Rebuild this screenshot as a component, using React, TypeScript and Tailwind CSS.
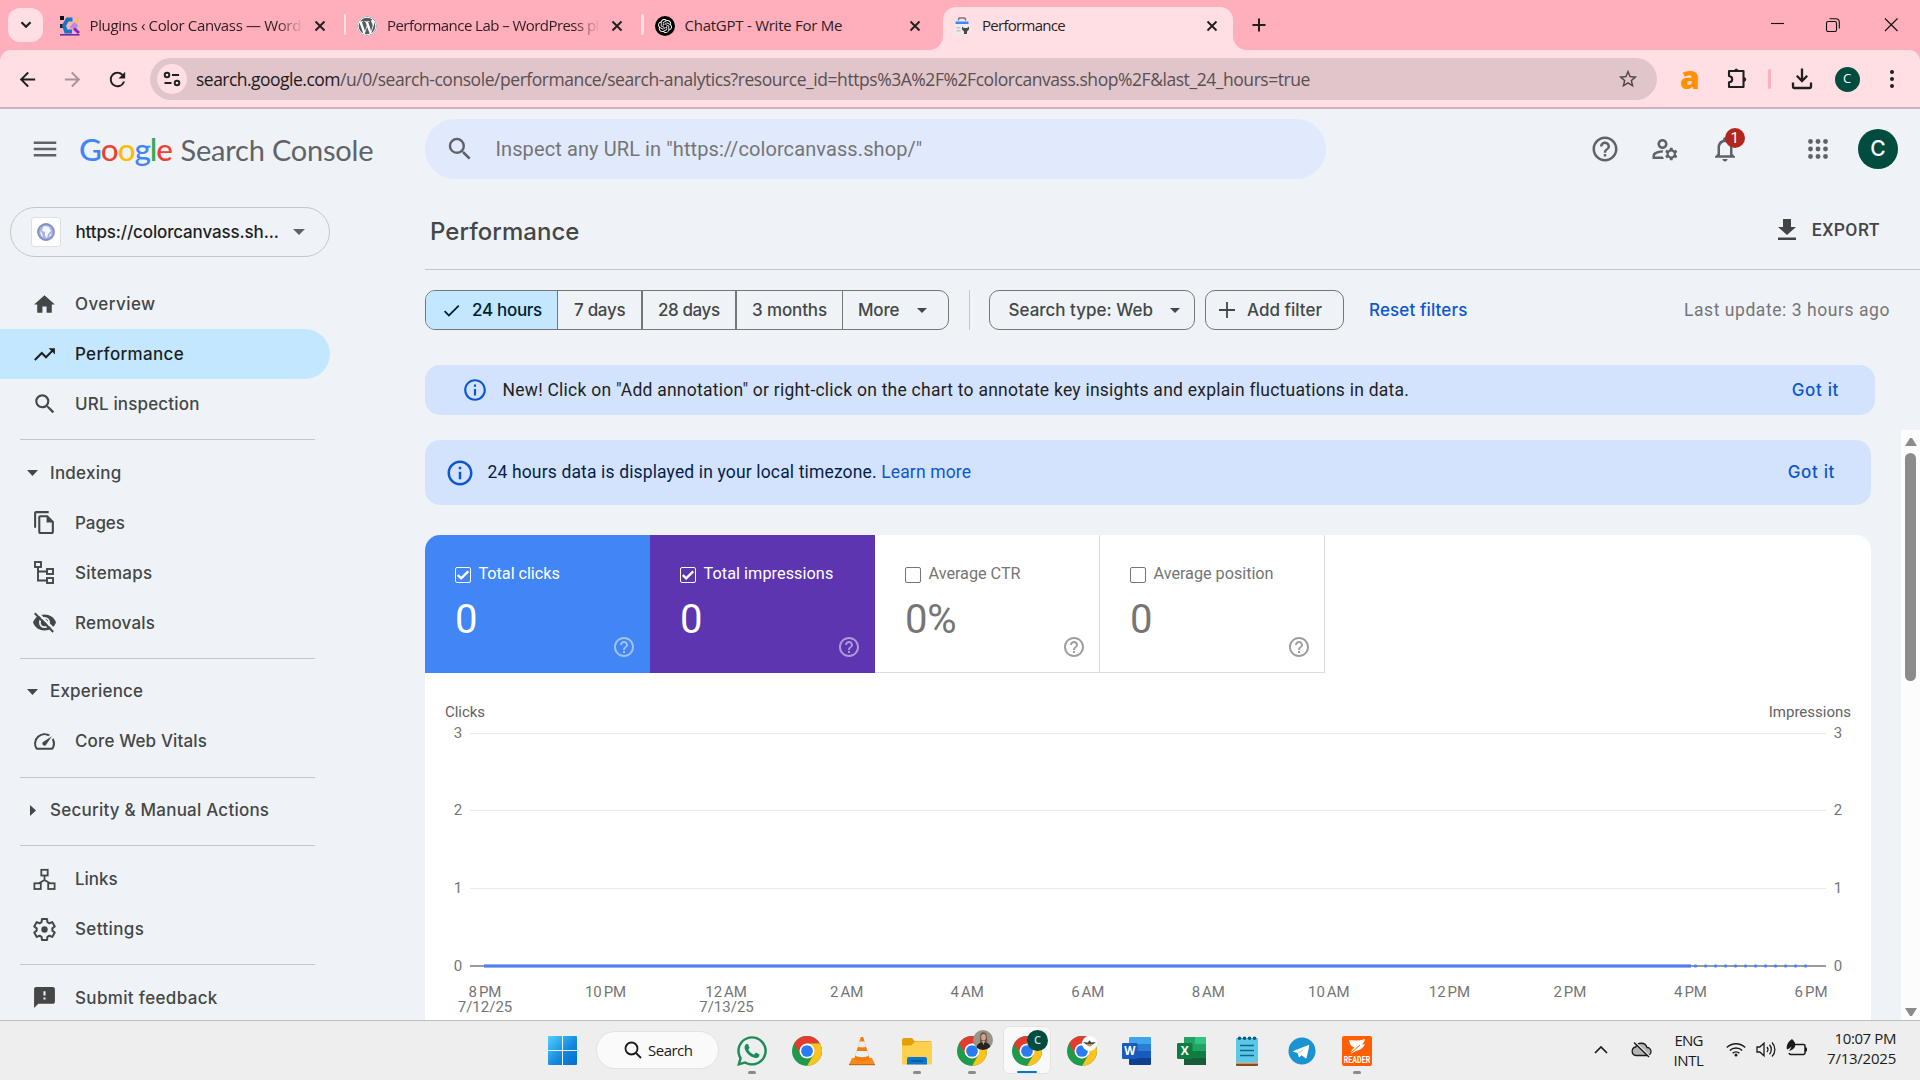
import type { ReactNode } from "react";
import {
  MdArrowBack,
  MdArrowForward,
  MdRefresh,
  MdStarBorder,
  MdMenu,
  MdSearch,
  MdHelpOutline,
  MdOutlineManageAccounts,
  MdNotificationsNone,
  MdHome,
  MdTrendingUp,
  MdOutlineFileCopy,
  MdFeedback,
  MdSpeed,
  MdCheck,
  MdInfoOutline,
} from "react-icons/md";
import { FaWhatsapp, FaWordpress } from "react-icons/fa";
import { SiOpenai } from "react-icons/si";

const CHROME_FONT = "font-['Open_Sans','Noto_Sans',sans-serif]";

/* ---------- Browser tabs ---------- */

function CanvassIcon() {
  return (
    <svg viewBox="0 0 20 20" className="size-5">
      <rect x="0" y="0" width="4" height="4" fill="#111" />
      <rect x="0" y="8" width="3" height="4" fill="#222" />
      <path d="M12.500 3.500H7.500L4 9.500 6 15.500h6" fill="none" stroke="#1277c4" strokeWidth="3.800" />
      <path d="M14 6l-4.500 5.500 6.500 2.500 2-5z" fill="#b98ad9" />
      <path d="M14 12.500l5 4.500" stroke="#7a2bc2" strokeWidth="3" />
      <path d="M16 7l3-4.500" stroke="#d8d13b" strokeWidth="1.600" />
      <path d="M0 18.800h19.500" stroke="#6a2bb0" strokeWidth="1.600" />
    </svg>
  );
}

function ConsoleIcon() {
  return (
    <svg viewBox="0 0 20 20" className="size-5">
      <path d="M6.500 5V3.200C6.500 2.500 7 2 7.600 2h4.800c.6 0 1.100.5 1.100 1.200V5" fill="none" stroke="#777" strokeWidth="1.500" />
      <rect x="2.500" y="4.500" width="15" height="14" rx="1" fill="#ececec" />
      <rect x="3.500" y="5.500" width="13" height="2.500" fill="#4285f4" />
      <rect x="4.500" y="11" width="4" height="1.500" fill="#c4c4c4" />
      <rect x="4.500" y="14" width="4" height="1.500" fill="#c4c4c4" />
      <path d="M10 10.500v3l2 2V18h3v-2.500l2-2v-3L15.200 12h-3.400z" fill="#4a4a4a" />
    </svg>
  );
}

function TabClose() {
  return (
    <svg viewBox="0 0 16 16" className="mb-1.5 ml-[9px] size-4 shrink-0" stroke="#1f1f1f" strokeWidth="1.900">
      <path d="M3.500 3.500l9 9M12.500 3.500l-9 9" />
    </svg>
  );
}

function Tab({ icon, title, fade, active, divider }: { icon: ReactNode; title: ReactNode; fade?: boolean; active?: boolean; divider?: boolean }) {
  return (
    <div className="flex h-[50px] w-[297.5px] shrink-0 pt-[7px]">
      <div
        className={
          active
            ? "relative flex h-[43px] w-[290px] items-center rounded-t-[13px] bg-[#ffdfe4] pr-2 pl-[9px]"
            : "flex h-[43px] w-[290px] items-center pr-2 pl-[9px]"
        }
      >
        {active && (
          <>
            <svg viewBox="0 0 14 14" className="absolute bottom-0 -left-[14px] size-[14px]">
              <path d="M14 0v14H0A14 14 0 0 0 14 0z" fill="#ffdfe4" />
            </svg>
            <svg viewBox="0 0 14 14" className="absolute -right-[14px] bottom-0 size-[14px]">
              <path d="M0 0v14h14A14 14 0 0 1 0 0z" fill="#ffdfe4" />
            </svg>
          </>
        )}
        <div className="mb-1.5 flex size-5 shrink-0 items-center justify-center">{icon}</div>
        <div
          className={
            fade
              ? "mb-1.5 ml-[10px] w-[213px] overflow-hidden text-[15px] whitespace-nowrap text-[#2b1f22] [mask-image:linear-gradient(to_right,black_88%,transparent_100%)]"
              : "mb-1.5 ml-[10px] w-[213px] overflow-hidden text-[15px] whitespace-nowrap text-[#2b1f22]"
          }
        >
          {title}
        </div>
        <TabClose />
      </div>
      {divider && <div className="mt-[7px] ml-[3px] h-[21px] w-[2.5px] rounded bg-[#ffdfe4]" />}
    </div>
  );
}

function TabStrip() {
  return (
    <div className="flex h-[50px] bg-[#ffaebc]">
      <div className="mt-2 mr-[7.5px] ml-2 flex h-[34px] w-[35px] shrink-0 items-center justify-center rounded-xl bg-[#ffdfe4]">
        <svg viewBox="0 0 12 8" className="h-2 w-3" fill="none" stroke="#1f1f1f" strokeWidth="2.200">
          <path d="M1.500 1.200L6 5.800l4.500-4.600" />
        </svg>
      </div>
      <Tab icon={<CanvassIcon />} title={<span className="tracking-[-0.35px]">Plugins ‹ Color Canvass — WordPress</span>} fade divider />
      <Tab icon={<FaWordpress className="size-5 rounded-full bg-white text-[#555a5c]" />} title={<span className="tracking-[-0.55px]">Performance Lab – WordPress plugin</span>} fade divider />
      <Tab
        icon={
          <span className="flex size-5 items-center justify-center rounded-full bg-black">
            <SiOpenai className="size-3.5 text-white" />
          </span>
        }
        title={<span className="tracking-[-0.25px]">ChatGPT - Write For Me</span>}
      />
      <Tab icon={<ConsoleIcon />} title={<span className="tracking-[-0.71px]">Performance</span>} active />
      <div className="flex h-[50px] w-9 items-center justify-center">
        <svg viewBox="0 0 14 14" className="size-3.5" stroke="#1f1f1f" strokeWidth="2">
          <path d="M7 .5v13M.5 7h13" />
        </svg>
      </div>
      <div className="flex flex-1 items-start justify-end pt-[17px] pr-5">
        <svg viewBox="0 0 130 15" className="h-[15px] w-[130px]" fill="none" stroke="#111" strokeWidth="1.100">
          <path d="M1 6.500h13" />
          <path d="M58 4.500h7a1.500 1.500 0 0 1 1.500 1.500v7a1.500 1.500 0 0 1-1.500 1.500h-7a1.500 1.500 0 0 1-1.500-1.500V6A1.500 1.500 0 0 1 58 4.500zM59.500 1.700H66a3.300 3.300 0 0 1 3.300 3.300v6.500" />
          <path d="M115 1.500l12.500 12.500M127.500 1.500L115 14" />
        </svg>
      </div>
    </div>
  );
}

/* ---------- Address bar ---------- */

function Toolbar() {
  return (
    <div className="bg-[#ffaebc]">
      <div className="flex h-[59px] rounded-t-[11px] border-b-2 border-[#cfb2b8] bg-[#ffdfe4] pt-2">
        <div className="flex h-[42px] w-[150px] items-center pl-[16px] text-[#1f1f1f]">
          <MdArrowBack className="size-[23px]" />
          <MdArrowForward className="ml-[22px] size-[23px] text-[#a8929a]" />
          <MdRefresh className="ml-[22px] size-[23px]" />
        </div>
        <div className="flex h-[42px] w-[1507px] items-center rounded-full bg-[#e0c5ca] pr-[18.5px] pl-[6.5px]">
          <div className="flex size-[30px] items-center justify-center rounded-full bg-[#ffdfe4]">
            <svg viewBox="0 0 18 16" className="h-4 w-[18px]" fill="none" stroke="#1f1f1f" strokeWidth="1.900">
              <circle cx="4" cy="4" r="2.300" />
              <path d="M9 4h7M1.500 12h7" />
              <circle cx="14" cy="12" r="2.300" />
            </svg>
          </div>
          <div className="ml-[9.500px] flex-1 text-[17.500px] tracking-[-0.445px] whitespace-nowrap text-[#5a4f52]">
            <span className="tracking-[-0.52px] text-[#1f1a1b]">search.google.com</span>
            /u/0/search-console/performance/search-analytics?resource_id=https%3A%2F%2Fcolorcanvass.shop%2F&amp;last_24_hours=true
          </div>
          <MdStarBorder className="size-[22px] text-[#4f4649]" />
        </div>
        <div className="flex h-[42px] flex-1 items-center">
          <span className="ml-6 flex h-7 w-[18px] items-center justify-center pb-1 font-['Open_Sans'] text-[32px] leading-none font-extrabold text-[#ff9100]">a</span>
          <svg viewBox="0 0 24 24" className="ml-[26px] size-6" fill="none" stroke="#1f1f1f" strokeWidth="2.100" strokeLinejoin="round">
            <path d="M4 4h14.500v16H4v-4.600c2.300-.3 3.200-1.600 3.200-3.200S6.300 9.300 4 9z" />
            <path d="M9.300 3.600a2.100 2.100 0 0 1 4 0zM19.300 10.400a2.100 2.100 0 0 1 0 4z" fill="#1f1f1f" strokeWidth="1" />
          </svg>
          <span className="ml-[19px] h-5 w-[2.5px] rounded bg-[#ffaebc]" />
          <svg viewBox="0 0 22 22" className="ml-[20.500px] size-[22px]" fill="none" stroke="#1f1f1f" strokeWidth="2.300">
            <path d="M11 .5v12M5.800 7.800l5.200 5.200 5.200-5.200M2 14.500v4a1.500 1.500 0 0 0 1.500 1.500h15a1.500 1.500 0 0 0 1.500-1.500v-4" />
          </svg>
          <span className="ml-[21.500px] flex size-[25px] items-center justify-center rounded-full bg-[#004d40] text-[13px] text-white">C</span>
          <svg viewBox="0 0 6 20" className="ml-[29.500px] h-5 w-1.5" fill="#1f1f1f">
            <circle cx="3" cy="3" r="2" />
            <circle cx="3" cy="10" r="2" />
            <circle cx="3" cy="17" r="2" />
          </svg>
        </div>
      </div>
    </div>
  );
}

/* ---------- Search Console header ---------- */

function GoogleLogo() {
  return (
    <div className="flex w-[300px] items-baseline font-['Lato',sans-serif] whitespace-nowrap">
      <span className="w-[101.5px] text-[31.5px] font-medium tracking-[-1.05px]">
        <span className="text-[#4285f4]">G</span>
        <span className="text-[#ea4335]">o</span>
        <span className="text-[#fbbc04]">o</span>
        <span className="text-[#4285f4]">g</span>
        <span className="text-[#34a853]">l</span>
        <span className="text-[#ea4335]">e</span>
      </span>
      <span className="text-[29px] tracking-[-0.2px] text-[#5f6368]">Search Console</span>
    </div>
  );
}

function ConsoleHeader() {
  return (
    <header className="flex h-[80px] items-center text-[#5f6368]">
      <MdMenu className="ml-[30px] size-[30px]" />
      <div className="ml-[19px] w-[345.500px] pt-0.5">
        <GoogleLogo />
      </div>
      <div className="flex h-[60px] w-[901px] items-center rounded-full bg-[#e1eafd] pl-5 font-['Roboto']">
        <MdSearch className="size-[30px]" />
        <span className="ml-[21px] text-[20px] tracking-[0.1px] text-[#757575]">Inspect any URL in "https://colorcanvass.shop/"</span>
      </div>
      <MdHelpOutline className="ml-[264.500px] size-[30px]" />
      <MdOutlineManageAccounts className="ml-[30px] size-[30px]" />
      <div className="relative ml-[30px]">
        <MdNotificationsNone className="size-[30px]" />
        <span className="absolute -top-[6px] left-[15px] flex h-5 w-[19.5px] items-center justify-center rounded-full bg-[#b3261e] font-['Roboto'] text-[15px] text-white">1</span>
      </div>
      <svg viewBox="0 0 20 20" className="ml-[68px] size-5" fill="currentColor">
        {[2.5, 10, 17.5].map((y) => [2.5, 10, 17.5].map((x) => <circle key={`${x}-${y}`} cx={x} cy={y} r="2.400" />))}
      </svg>
      <span className="ml-[30px] flex size-10 items-center justify-center rounded-full bg-[#004d40] font-['Inter'] text-[21px] font-medium text-white">C</span>
    </header>
  );
}

/* ---------- Sidebar ---------- */

function SitemapGlyph() {
  return (
    <svg viewBox="0 0 25 25" className="size-[25px]" fill="none" stroke="currentColor" strokeWidth="1.900">
      <rect x="3" y="2" width="6" height="5" />
      <rect x="15" y="9" width="6" height="5" />
      <rect x="15" y="18" width="6" height="5" />
      <path d="M6 7v13.500h9M6 11.500h9" />
    </svg>
  );
}

function LinksGlyph() {
  return (
    <svg viewBox="0 0 25 25" className="size-[25px]" fill="none" stroke="currentColor" strokeWidth="1.800">
      <rect x="9.300" y="2.800" width="6.400" height="5.700" />
      <rect x="2.400" y="16.300" width="6.400" height="5.700" />
      <rect x="16.200" y="16.300" width="6.400" height="5.700" />
      <path d="M12.500 8.500v4.500l-5.500 3.300M12.500 13l5.500 3.300" />
    </svg>
  );
}

function RemovalsGlyph() {
  return (
    <svg viewBox="0 0 25 25" className="size-[25px]">
      <path d="M1 12.500C3 7.300 7.400 4.600 12.500 4.600S22 7.300 24 12.500c-2 5.200-6.400 7.900-11.500 7.900S3 17.700 1 12.500z" fill="currentColor" />
      <circle cx="12.500" cy="12.500" r="4.600" fill="none" stroke="#eff3f8" strokeWidth="1.800" />
      <path d="M4.600 1.800l19 19" stroke="#eff3f8" strokeWidth="2.400" />
      <path d="M2.800 3.200l18.400 18.800" stroke="currentColor" strokeWidth="2" />
    </svg>
  );
}

const GEAR_POINTS = Array.from({ length: 6 }, (_, i) => {
  const base = (i * Math.PI) / 3 - Math.PI / 2;
  return [
    [-0.38, 7.9],
    [-0.24, 10.7],
    [0.24, 10.7],
    [0.38, 7.9],
  ]
    .map(([da, r]) => `${(12.5 + r * Math.cos(base + da)).toFixed(2)},${(12.5 + r * Math.sin(base + da)).toFixed(2)}`)
    .join(" ");
}).join(" ");

function SettingsGlyph() {
  return (
    <svg viewBox="0 0 25 25" className="size-[25px]">
      <polygon points={GEAR_POINTS} fill="none" stroke="currentColor" strokeWidth="2" strokeLinejoin="round" />
      <circle cx="12.500" cy="12.500" r="3.200" fill="currentColor" />
    </svg>
  );
}

function NavItem({ icon, label, active }: { icon: ReactNode; label: ReactNode; active?: boolean }) {
  return (
    <div
      className={
        active
          ? "flex h-[50px] w-[330px] shrink-0 items-center rounded-r-full bg-[#c2e7ff] pl-8 text-[#1f1f1f]"
          : "flex h-[50px] w-[330px] shrink-0 items-center pl-8"
      }
    >
      <span className="flex w-[25px] justify-center">{icon}</span>
      <span className="mt-px ml-[18px]">{label}</span>
    </div>
  );
}

function NavGroup({ label, closed }: { label: ReactNode; closed?: boolean }) {
  return (
    <div className="flex h-[50px] shrink-0 items-center pl-[27px]">
      <svg viewBox="0 0 11 11" className="size-[11px]" fill="currentColor">
        {closed ? <path d="M3 0l6 5.500L3 11z" /> : <path d="M0 3h11L5.500 9z" />}
      </svg>
      <span className="mt-px ml-[12px]">{label}</span>
    </div>
  );
}

function NavRule() {
  return (
    <div className="h-[18.75px] shrink-0 pt-2.5 pl-5">
      <div className="h-px w-[295px] bg-[#c4c7c5]" />
    </div>
  );
}

function Sidebar() {
  return (
    <nav className="flex w-[425px] shrink-0 flex-col overflow-hidden pt-[18px] font-['Inter',sans-serif] text-[17px] font-medium whitespace-nowrap text-[#444746]">
      <div className="mb-[22px] ml-2.5 flex h-[50px] w-[320px] shrink-0 items-center rounded-full border border-[#c4c7c5] pl-5 text-[#1f1f1f]">
        <span className="flex size-[30px] items-center justify-center rounded-[3px] border border-[#e0e0e0] bg-white">
          <svg viewBox="0 0 18 18" className="size-[18px]">
            <circle cx="9" cy="9" r="8" fill="#a9b3dc" stroke="#8490c4" strokeWidth="1.800" />
            <path d="M8 3l4 1 2 4-3 3-1 4-2-2V9L5 8l1-4z" fill="#f3f5fc" />
            <path d="M3 8l2 2 1 4-2-2zM12 12l3-2-2 4z" fill="#f3f5fc" />
          </svg>
        </span>
        <span className="mt-px ml-[14.500px] w-[202px] tracking-[-0.14px]">https://colorcanvass.sh...</span>
        <svg viewBox="0 0 12 6" className="ml-[15px] h-1.5 w-3" fill="#5f6368">
          <path d="M0 0h12L6 6z" />
        </svg>
      </div>
      <NavItem icon={<MdHome className="size-[25px]" />} label={<span className="tracking-[0.42px]">Overview</span>} />
      <NavItem active icon={<MdTrendingUp className="size-[25px]" />} label={<span className="tracking-[0.32px]">Performance</span>} />
      <NavItem icon={<MdSearch className="size-[26px] shrink-0" />} label={<span className="tracking-[0.16px]">URL inspection</span>} />
      <NavRule />
      <NavGroup label={<span className="tracking-[0.25px]">Indexing</span>} />
      <NavItem icon={<MdOutlineFileCopy className="size-[25px]" />} label={<span className="tracking-[-0.05px]">Pages</span>} />
      <NavItem icon={<SitemapGlyph />} label={<span className="tracking-[0.26px]">Sitemaps</span>} />
      <NavItem icon={<RemovalsGlyph />} label={<span className="tracking-[0.2px]">Removals</span>} />
      <NavRule />
      <NavGroup label={<span className="tracking-[0.2px]">Experience</span>} />
      <NavItem icon={<MdSpeed className="size-[25px]" />} label={<span className="tracking-[0.13px]">Core Web Vitals</span>} />
      <NavRule />
      <NavGroup closed label={<span className="tracking-[0.22px]">Security &amp; Manual Actions</span>} />
      <NavRule />
      <NavItem icon={<LinksGlyph />} label={<span className="tracking-[-0.05px]">Links</span>} />
      <NavItem icon={<SettingsGlyph />} label={<span className="tracking-[0.38px]">Settings</span>} />
      <NavRule />
      <NavItem icon={<MdFeedback className="size-[25px]" />} label={<span className="tracking-[0.34px]">Submit feedback</span>} />
    </nav>
  );
}

/* ---------- Filters ---------- */

function Caret() {
  return (
    <svg viewBox="0 0 10 5" className="h-[5px] w-[10px] shrink-0" fill="currentColor">
      <path d="M0 0h10L5 5z" />
    </svg>
  );
}

function Filters() {
  return (
    <div className="mt-5 flex h-10 items-center font-['Inter',sans-serif] text-[17px] font-medium whitespace-nowrap text-[#444746]">
      <div className="flex h-10 w-[524px] overflow-hidden rounded-[10px] border border-[#747775]">
        <div className="flex w-[132px] items-center border-r border-[#747775] bg-[#c2e7ff] pl-[14.500px] text-[#001d35]">
          <MdCheck className="size-[21px]" />
          <span className="mt-px ml-[10.500px] tracking-[-0.3px]">24 hours</span>
        </div>
        <div className="flex w-[84.5px] items-center border-r-2 border-[#747775] pt-px pl-[16px] tracking-[-0.3px]">7 days</div>
        <div className="flex w-[94.5px] items-center border-r-2 border-[#747775] pt-px pl-[15.500px] tracking-[-0.4px]">28 days</div>
        <div className="flex w-[106px] items-center border-r border-[#747775] pt-px pl-[15px] tracking-[-0.12px]">3 months</div>
        <div className="flex items-center pt-px pl-[15px] tracking-[-0.2px]">
          More
          <span className="mb-px ml-[17.500px]">
            <Caret />
          </span>
        </div>
      </div>
      <div className="ml-5 h-10 w-px bg-[#c4c7c5]" />
      <div className="ml-[19px] flex h-10 w-[206px] items-center justify-between rounded-[10px] border border-[#747775] pr-[14px] pl-[18.500px]">
        <span className="mt-px">Search type: Web</span>
        <Caret />
      </div>
      <div className="ml-2.5 flex h-10 w-[139px] items-center rounded-[10px] border border-[#747775] pl-[13px]">
        <svg viewBox="0 0 16 16" className="size-4" stroke="currentColor" strokeWidth="1.800">
          <path d="M8 0v16M0 8h16" />
        </svg>
        <span className="mt-px ml-3">Add filter</span>
      </div>
      <span className="mt-px ml-[25px] tracking-[0.12px] text-[#0b57d0]">Reset filters</span>
      <span className="mt-px ml-auto pr-[30px] font-['Roboto'] text-[17.5px] font-normal tracking-[0.56px] text-[#757575]">Last update: 3 hours ago</span>
    </div>
  );
}

/* ---------- Metrics and chart ---------- */

function Metric({ label, value, tone }: { label: ReactNode; value: string; tone: "blue" | "purple" | "plain" }) {
  const on = tone !== "plain";
  return (
    <div
      className={
        tone === "blue"
          ? "relative h-[138px] w-[225px] bg-[#4285f4] pt-[27px] pl-[30px] text-white"
          : tone === "purple"
            ? "relative h-[138px] w-[225px] bg-[#5e35b1] pt-[27px] pl-[30px] text-white"
            : "relative h-[138px] w-[225px] border-r border-b border-[#dadce0] pt-[27px] pl-[30px] text-[#757575]"
      }
    >
      <div className="flex h-[26px] items-center text-[16.25px] whitespace-nowrap">
        <span className="mr-[7.500px] flex size-4 items-center justify-center rounded-[2px] border border-current">
          {on && (
            <svg viewBox="0 0 12 10" className="h-2.5 w-3" fill="none" stroke="currentColor" strokeWidth="2.400">
              <path d="M.8 5l3.400 3.300L11.200 1.300" />
            </svg>
          )}
        </span>
        <span className="-mt-0.5">{label}</span>
      </div>
      <div className="mt-[8px] text-[40px] leading-[48px] tracking-[-0.3px]">{value}</div>
      <MdHelpOutline className={on ? "absolute right-[14px] bottom-[14.500px] size-6 opacity-50" : "absolute right-[13.500px] bottom-[13.500px] size-6 opacity-70"} />
    </div>
  );
}

const HOURS = ["8 PM", "10 PM", "12 AM", "2 AM", "4 AM", "6 AM", "8 AM", "10 AM", "12 PM", "2 PM", "4 PM", "6 PM"];
const LEVELS = [
  { n: 3, y: 60 },
  { n: 2, y: 137 },
  { n: 1, y: 215 },
  { n: 0, y: 293 },
];

function Chart() {
  return (
    <svg viewBox="0 0 1446 347" className="block h-[347px] w-[1446px]" fontFamily="Roboto, sans-serif" fontSize="15" fill="#757575">
      <text x="20" y="44" fill="#616161" textLength="40">
        Clicks
      </text>
      <text x="1426" y="44" fill="#616161" textAnchor="end">
        Impressions
      </text>
      {LEVELS.map(({ n, y }) => (
        <g key={n}>
          <text x="33" y={y + 5.3} textAnchor="middle">
            {n}
          </text>
          <text x="1413" y={y + 5.3} textAnchor="middle">
            {n}
          </text>
          {n > 0 && <rect x="45" y={y} width="1356" height="1" fill="#ebebeb" />}
        </g>
      ))}
      <rect x="45" y="292" width="1356" height="2" fill="#9a9a9a" />
      <rect x="59" y="291" width="1207" height="4" fill="#a9a6ea" />
      <rect x="59" y="292" width="1207" height="2" fill="#4285f4" />
      {Array.from({ length: 12 }, (_, i) => (
        <rect key={i} x={1269 + i * 10} y="291.500" width="3" height="3" rx="1" fill="#4285f4" />
      ))}
      {HOURS.map((h, i) => (
        <text key={h} x={60 + i * 120.55} y="323.800" textAnchor="middle" wordSpacing="-1.800">
          {h}
        </text>
      ))}
      <text x="60" y="338.500" textAnchor="middle">
        7/12/25
      </text>
      <text x="301.500" y="338.500" textAnchor="middle">
        7/13/25
      </text>
    </svg>
  );
}

function Main() {
  return (
    <main className="flex w-[1495px] flex-col font-['Roboto',sans-serif]">
      <div className="flex h-[81px] items-center justify-between border-b border-[#c4c7c5] pr-10 pb-px pl-[5px]">
        <h1 className="mt-1.5 font-['Inter',sans-serif] text-[24px] font-medium tracking-[0.05px] text-[#444746]">Performance</h1>
        <div className="mt-0.5 flex items-center text-[17.500px] font-medium tracking-[0.5px] text-[#444746]">
          <svg viewBox="0 0 18 21" className="mr-[16px] mb-px h-[21px] w-[18px]" fill="#444">
            <path d="M5 0h8v8h5l-9 8-9-8h5zM0 18.500h18V21H0z" />
          </svg>
          <span className="mt-px">EXPORT</span>
        </div>
      </div>
      <Filters />
      <div className="mt-[35px] flex h-[50px] w-[1450px] shrink-0 items-center rounded-[15px] bg-[#d3e3fd] pl-[37px] text-[17.500px] whitespace-nowrap text-[#1f1f1f]">
        <MdInfoOutline className="size-[26px] text-[#0b57d0]" />
        <span className="mt-px ml-[14.500px] tracking-[0.241px]">New! Click on "Add annotation" or right-click on the chart to annotate key insights and explain fluctuations in data.</span>
        <span className="mt-0.5 mr-9 ml-auto font-['Inter'] text-[17px] font-medium tracking-[0.65px] text-[#0b57d0]">Got it</span>
      </div>
      <div className="mt-[15px] flex h-[590px] justify-between">
        <div className="w-[1446px] overflow-hidden pt-2.5">
          <div className="flex h-[65px] items-center rounded-[15px] bg-[#d3e3fd] pl-5 text-[17.500px] whitespace-nowrap text-[#041e49]">
            <MdInfoOutline className="mt-px size-[30px] text-[#0b57d0]" />
            <span className="ml-[12.500px] tracking-[0.144px]">
              24 hours data is displayed in your local timezone. <span className="text-[#0b57d0]">Learn more</span>
            </span>
            <span className="mt-px mr-9 ml-auto font-['Inter'] text-[17px] font-medium tracking-[0.65px] text-[#0b57d0]">Got it</span>
          </div>
          <div className="mt-[30px] overflow-hidden rounded-t-[15px] bg-white">
            <div className="flex">
              <Metric tone="blue" label={<span className="tracking-[-0.05px]">Total clicks</span>} value="0" />
              <Metric tone="purple" label={<span className="tracking-[0.05px]">Total impressions</span>} value="0" />
              <Metric tone="plain" label={<span className="tracking-[-0.04px]">Average CTR</span>} value="0%" />
              <Metric tone="plain" label={<span className="tracking-[-0.04px]">Average position</span>} value="0" />
            </div>
            <Chart />
          </div>
        </div>
        <div className="flex w-[19px] flex-col items-center bg-[#fcfcfc] pt-[7px] pb-[3px]">
          <svg viewBox="0 0 12 9" className="h-[9px] w-3" fill="#8b8b8b">
            <path d="M0 9L5 1h2l5 8z" />
          </svg>
          <div className="mt-[7px] h-[228px] w-[11px] rounded-full bg-[#8b8b8b]" />
          <svg viewBox="0 0 12 9" className="mt-auto h-[9px] w-3" fill="#8b8b8b">
            <path d="M0 0h12L7 8H5z" />
          </svg>
        </div>
      </div>
    </main>
  );
}

/* ---------- Taskbar ---------- */

function ChromeLogo() {
  return (
    <svg viewBox="2 2 44 44" className="size-[30px]">
      <circle cx="24" cy="24" r="22" fill="#1e9a4a" />
      <path d="M4.950 13A22 22 0 0 1 43.050 13H24v11l-9.530 5.500z" fill="#e33b2e" />
      <path d="M43.050 13A22 22 0 0 1 24 46l9.530-16.500L24 24V13z" fill="#fcc31e" />
      <circle cx="24" cy="24" r="11" fill="#fff" />
      <circle cx="24" cy="24" r="8.600" fill="#2a7af0" />
    </svg>
  );
}

function Portrait() {
  return (
    <svg viewBox="0 0 20 20" className="absolute -top-1.5 left-4 size-5">
      <clipPath id="portrait-clip">
        <circle cx="10" cy="10" r="10" />
      </clipPath>
      <g clipPath="url(#portrait-clip)">
        <rect width="20" height="20" fill="#98948a" />
        <path d="M7.500 4c1.500-2.500 5-2 6 .5l.8 7.500H7z" fill="#6a5348" />
        <ellipse cx="10.500" cy="7.300" rx="2.300" ry="3.200" fill="#d3a58c" />
        <path d="M3 20c0-5 3-8 7.500-8S18 15 18 20z" fill="#26221f" />
        <path d="M9 11h3l-1.500 4z" fill="#d3a58c" />
      </g>
    </svg>
  );
}

function WordIcon() {
  return (
    <svg viewBox="0 0 30 30" className="size-[30px]">
      <path d="M8 1h20a1 1 0 0 1 1 1v6H7V2a1 1 0 0 1 1-1z" fill="#41a5ee" />
      <path d="M7 8h22v7H7z" fill="#2b7cd3" />
      <path d="M7 15h22v7H7z" fill="#185abd" />
      <path d="M7 22h22v6a1 1 0 0 1-1 1H8a1 1 0 0 1-1-1z" fill="#103f91" />
      <rect x="0" y="7" width="15.500" height="16" rx="1.200" fill="#185abd" />
      <text x="7.700" y="19.200" textAnchor="middle" fontFamily="Open Sans" fontWeight="700" fontSize="11.500" fill="#fff">
        W
      </text>
    </svg>
  );
}

function ExcelIcon() {
  return (
    <svg viewBox="0 0 30 30" className="size-[30px]">
      <rect x="7" y="1" width="11" height="14" fill="#21a366" />
      <rect x="18" y="1" width="11" height="7" fill="#33c481" />
      <rect x="18" y="8" width="11" height="7" fill="#21a366" />
      <rect x="7" y="15" width="22" height="7" fill="#107c41" />
      <rect x="7" y="22" width="22" height="7" fill="#185c37" />
      <rect x="0" y="7" width="15.500" height="16" rx="1.200" fill="#107c41" />
      <text x="7.700" y="19.200" textAnchor="middle" fontFamily="Open Sans" fontWeight="700" fontSize="12" fill="#fff">
        X
      </text>
    </svg>
  );
}

function VlcIcon() {
  return (
    <svg viewBox="0 0 30 30" className="size-[30px]">
      <path d="M5 22h20l3 6.500H2z" fill="#f58a1f" />
      <path d="M2 28h26v1.200H2z" fill="#c96a10" />
      <path d="M13.800 1h2.400l6.500 22c-2 2.600-13.400 2.600-15.400 0z" fill="#f07c12" />
      <path d="M12.500 5.500h5l1.500 5c-1.500 1.200-6.500 1.200-8 0z" fill="#eceff1" />
      <path d="M9.700 15h10.600l1.400 4.800c-2.500 1.900-10.900 1.900-13.400 0z" fill="#eceff1" />
    </svg>
  );
}

function FolderIcon() {
  return (
    <svg viewBox="0 0 30 30" className="size-[30px]">
      <path d="M0 4a2 2 0 0 1 2-2h8l2.500 3H29v6H0z" fill="#e3a008" />
      <path d="M0 9.500h9L13 5.500h16a1 1 0 0 1 1 1V27a1.500 1.500 0 0 1-1.500 1.500h-27A1.500 1.500 0 0 1 0 27z" fill="#fdd04d" />
      <path d="M5 28.500V23a2 2 0 0 1 2-2h16a2 2 0 0 1 2 2v5.500z" fill="#0c76cc" />
      <path d="M9 25h12" stroke="#084a8a" strokeWidth="1.200" />
    </svg>
  );
}

function NotepadIcon() {
  return (
    <svg viewBox="0 0 30 30" className="size-[30px]">
      <rect x="4" y="2" width="22" height="25" rx="1" fill="#5cc8e6" />
      <path d="M4 26.500h22V29a1 1 0 0 1-1 1H5a1 1 0 0 1-1-1z" fill="#8d4a12" />
      <path d="M4 26.500h22v1H4z" fill="#e8e8e8" />
      {[7.5, 12.5, 17.5, 22.5].map((x) => (
        <circle key={x} cx={x} cy="2.200" r="1.800" fill="#0a5c7d" />
      ))}
      <path d="M8 9.500h14M8 14.500h14M8 19.500h14" stroke="#0a6a90" strokeWidth="1.600" />
    </svg>
  );
}

function TelegramIcon() {
  return (
    <svg viewBox="0 0 30 30" className="size-[30px]">
      <circle cx="15" cy="15" r="13.500" fill="#1b92d1" />
      <path d="M6.300 15L21 9.200c.8-.3 1.300.2 1.100 1.200l-2.400 11c-.2.900-.8 1-1.500.6l-3.700-2.700-1.900 1.800c-.3.300-.7.200-.8-.2L10.600 17l-4.200-1.300c-.5-.2-.5-.5-.1-.7z" fill="#fff" />
      <path d="M10.700 17l8.300-5.500-6.600 6.500z" fill="#b9dcef" />
    </svg>
  );
}

function ReaderIcon() {
  return (
    <svg viewBox="0 0 30 30" className="size-[30px]">
      <rect width="30" height="30" rx="2" fill="#ff5f00" />
      <path d="M7 4c5 .8 10 .8 16-1-.5 3-1.700 4.500-3.500 5.500 1.200.2 2.300 0 3.500-.7-1.500 4-4.500 6.200-8.500 7l-6 3.200c.5-2.500 1.500-4.500 4-6.500-3-.5-5-3-5.500-7.500z" fill="#fff" />
      <path d="M8.500 17.500L18 9" stroke="#ff5f00" strokeWidth="1" />
      <text x="15" y="26.800" textAnchor="middle" fontFamily="Roboto" fontWeight="700" fontSize="9" textLength="26.500" lengthAdjust="spacingAndGlyphs" fill="#fff">
        READER
      </text>
    </svg>
  );
}

function TaskItem({ children, state }: { children: ReactNode; state?: "open" | "active" }) {
  return (
    <div className="flex h-[59px] w-[55px] shrink-0 items-start justify-center pt-[5px]">
      <div
        className={
          state === "active"
            ? "flex h-12 w-12 flex-col items-center rounded-md border border-[#e4e4e4] bg-[#f9f9f9] pt-[8.500px]"
            : "flex h-12 w-12 flex-col items-center pt-[9.500px]"
        }
      >
        <div className="relative size-[30px]">{children}</div>
        {state === "open" && <div className="mt-[5px] h-1 w-2 rounded-full bg-[#8a8a8a]" />}
        {state === "active" && <div className="mt-[5px] h-1 w-5 rounded-full bg-[#0078d4]" />}
      </div>
    </div>
  );
}

function Taskbar() {
  return (
    <footer className="flex h-[60px] border-t border-[#bdbdbd] bg-[#eeeeee]">
      <svg viewBox="0 0 29 29" className="mt-[15px] ml-[548px] size-[29px] shrink-0">
        <defs>
          <linearGradient id="win" x1="0" y1="0" x2="29" y2="29" gradientUnits="userSpaceOnUse">
            <stop offset="0" stopColor="#4fd0fd" />
            <stop offset="0.600" stopColor="#1285dc" />
            <stop offset="1" stopColor="#0070cc" />
          </linearGradient>
        </defs>
        <path d="M0 1a1 1 0 0 1 1-1h13v14H0zM15 0h13a1 1 0 0 1 1 1v13H15zM0 15h14v14H1a1 1 0 0 1-1-1zM15 15h14v13a1 1 0 0 1-1 1H15z" fill="url(#win)" />
      </svg>
      <div className="mt-[10px] ml-[19px] flex h-[38px] w-[123px] shrink-0 items-center rounded-full border border-[#e3e3e3] bg-[#fafafa] pl-[27px]">
        <svg viewBox="0 0 18 18" className="size-[18px]" fill="none" stroke="#1a1a1a" strokeWidth="1.800">
          <circle cx="7.500" cy="7.500" r="6" />
          <path d="M12 12l5 5" />
        </svg>
        <span className="ml-[6px] text-[15px] tracking-[-0.5px] text-[#1a1a1a]">Search</span>
      </div>
      <div className="ml-[5px] flex">
        <TaskItem state="open">
          <FaWhatsapp className="size-[34px] -translate-x-0.5 -translate-y-0.5 text-[#1c8c5a]" />
        </TaskItem>
        <TaskItem>
          <ChromeLogo />
        </TaskItem>
        <TaskItem>
          <VlcIcon />
        </TaskItem>
        <TaskItem state="open">
          <FolderIcon />
        </TaskItem>
        <TaskItem state="open">
          <ChromeLogo />
          <Portrait />
        </TaskItem>
        <TaskItem state="active">
          <ChromeLogo />
          <span className="absolute -top-1.5 left-[15.500px] flex size-[21px] items-center justify-center rounded-full bg-[#004d40] text-[11px] font-semibold text-[#cfe0dc]">C</span>
        </TaskItem>
        <TaskItem>
          <ChromeLogo />
          <svg viewBox="0 0 16 16" className="absolute top-0 left-[15px] size-[15px]">
            <circle cx="8" cy="8" r="8" fill="#fff" />
            <path d="M1 6.500l5 .5L8 4.500l2 2.500 5-.5-3.500 2.500h-7z" fill="#3a4a44" />
            <path d="M5 9h6l-1.500 2h-3z" fill="#d98a2b" />
          </svg>
        </TaskItem>
        <TaskItem>
          <WordIcon />
        </TaskItem>
        <TaskItem>
          <ExcelIcon />
        </TaskItem>
        <TaskItem>
          <NotepadIcon />
        </TaskItem>
        <TaskItem>
          <TelegramIcon />
        </TaskItem>
        <TaskItem state="open">
          <ReaderIcon />
        </TaskItem>
      </div>
      <div className="ml-auto flex h-[57px] items-center pr-6 text-[15px] text-[#1a1a1a]">
        <svg viewBox="0 0 14 8" className="h-2 w-3.5" fill="none" stroke="#1a1a1a" strokeWidth="1.700">
          <path d="M1 7l6-6 6 6" />
        </svg>
        <svg viewBox="0 0 21 17" className="ml-[22.500px] h-[17px] w-[21px]">
          <path d="M5 14.500a4.300 4.300 0 0 1-.3-8.500A6 6 0 0 1 16 6.500a4 4 0 0 1 0 8z" fill="#b5b5b5" stroke="#1a1a1a" strokeWidth="1.300" />
          <path d="M4.500 1.500l15 14.500" stroke="#eee" strokeWidth="1.600" />
          <path d="M3 1.500l15 14.500" stroke="#1a1a1a" strokeWidth="1.400" />
        </svg>
        <div className="ml-[21.500px] flex w-[31px] flex-col items-center leading-5">
          <span className="tracking-[-0.850px]">ENG</span>
          <span className="tracking-[-0.400px]">INTL</span>
        </div>
        <svg viewBox="0 0 20 15" className="ml-[21.500px] h-[15px] w-5" fill="none" stroke="#1a1a1a" strokeWidth="1.400">
          <path d="M.8 5.600a13 13 0 0 1 18.400 0M3.800 8.500a8.800 8.800 0 0 1 12.400 0M6.600 11.300a4.800 4.800 0 0 1 6.800 0" />
          <circle cx="10" cy="13" r="1.500" fill="#1a1a1a" stroke="none" />
        </svg>
        <svg viewBox="0 0 20 17" className="ml-[10px] h-[17px] w-5" fill="none" stroke="#1a1a1a" strokeWidth="1.300">
          <path d="M1 6v5h2.800l4.200 3.800V2.200L3.800 6z" />
          <path d="M11 6a4 4 0 0 1 0 5M13.500 3.800a7 7 0 0 1 0 9.400M16 1.500a10 10 0 0 1 0 14" />
        </svg>
        <svg viewBox="0 0 21 18" className="mb-1 ml-[10px] h-[18px] w-[21px]">
          <path d="M9 5.500h8.500A1.500 1.500 0 0 1 19 7v7a1.500 1.500 0 0 1-1.500 1.500h-13A2 2 0 0 1 3 14" fill="none" stroke="#1a1a1a" strokeWidth="1.500" />
          <path d="M19 8.500h1.200a.8.800 0 0 1 .8.800v2.400a.8.800 0 0 1-.8.800H19z" fill="#1a1a1a" />
          <path d="M6 0c3 2.500 3.800 5 3 7.500C8.300 9.500 6 11 3 12c0 0 2-2.500 2.500-4.500C4 9 2.500 10 1 10.500 0 7.500 1.500 3 6 0z" fill="#1a1a1a" />
        </svg>
        <div className="mb-1 ml-[16.500px] flex w-[73px] flex-col items-end leading-5">
          <span className="tracking-[-0.400px]">10:07 PM</span>
          <span className="tracking-[-0.230px]">7/13/2025</span>
        </div>
      </div>
    </footer>
  );
}

export default function App() {
  return (
    <div className={`flex h-[1080px] w-[1920px] flex-col overflow-hidden bg-[#eff3f8] ${CHROME_FONT}`}>
      <TabStrip />
      <Toolbar />
      <div className="flex h-[911px] shrink-0 flex-col overflow-hidden">
        <ConsoleHeader />
        <div className="flex h-[831px]">
          <Sidebar />
          <Main />
        </div>
      </div>
      <Taskbar />
    </div>
  );
}
